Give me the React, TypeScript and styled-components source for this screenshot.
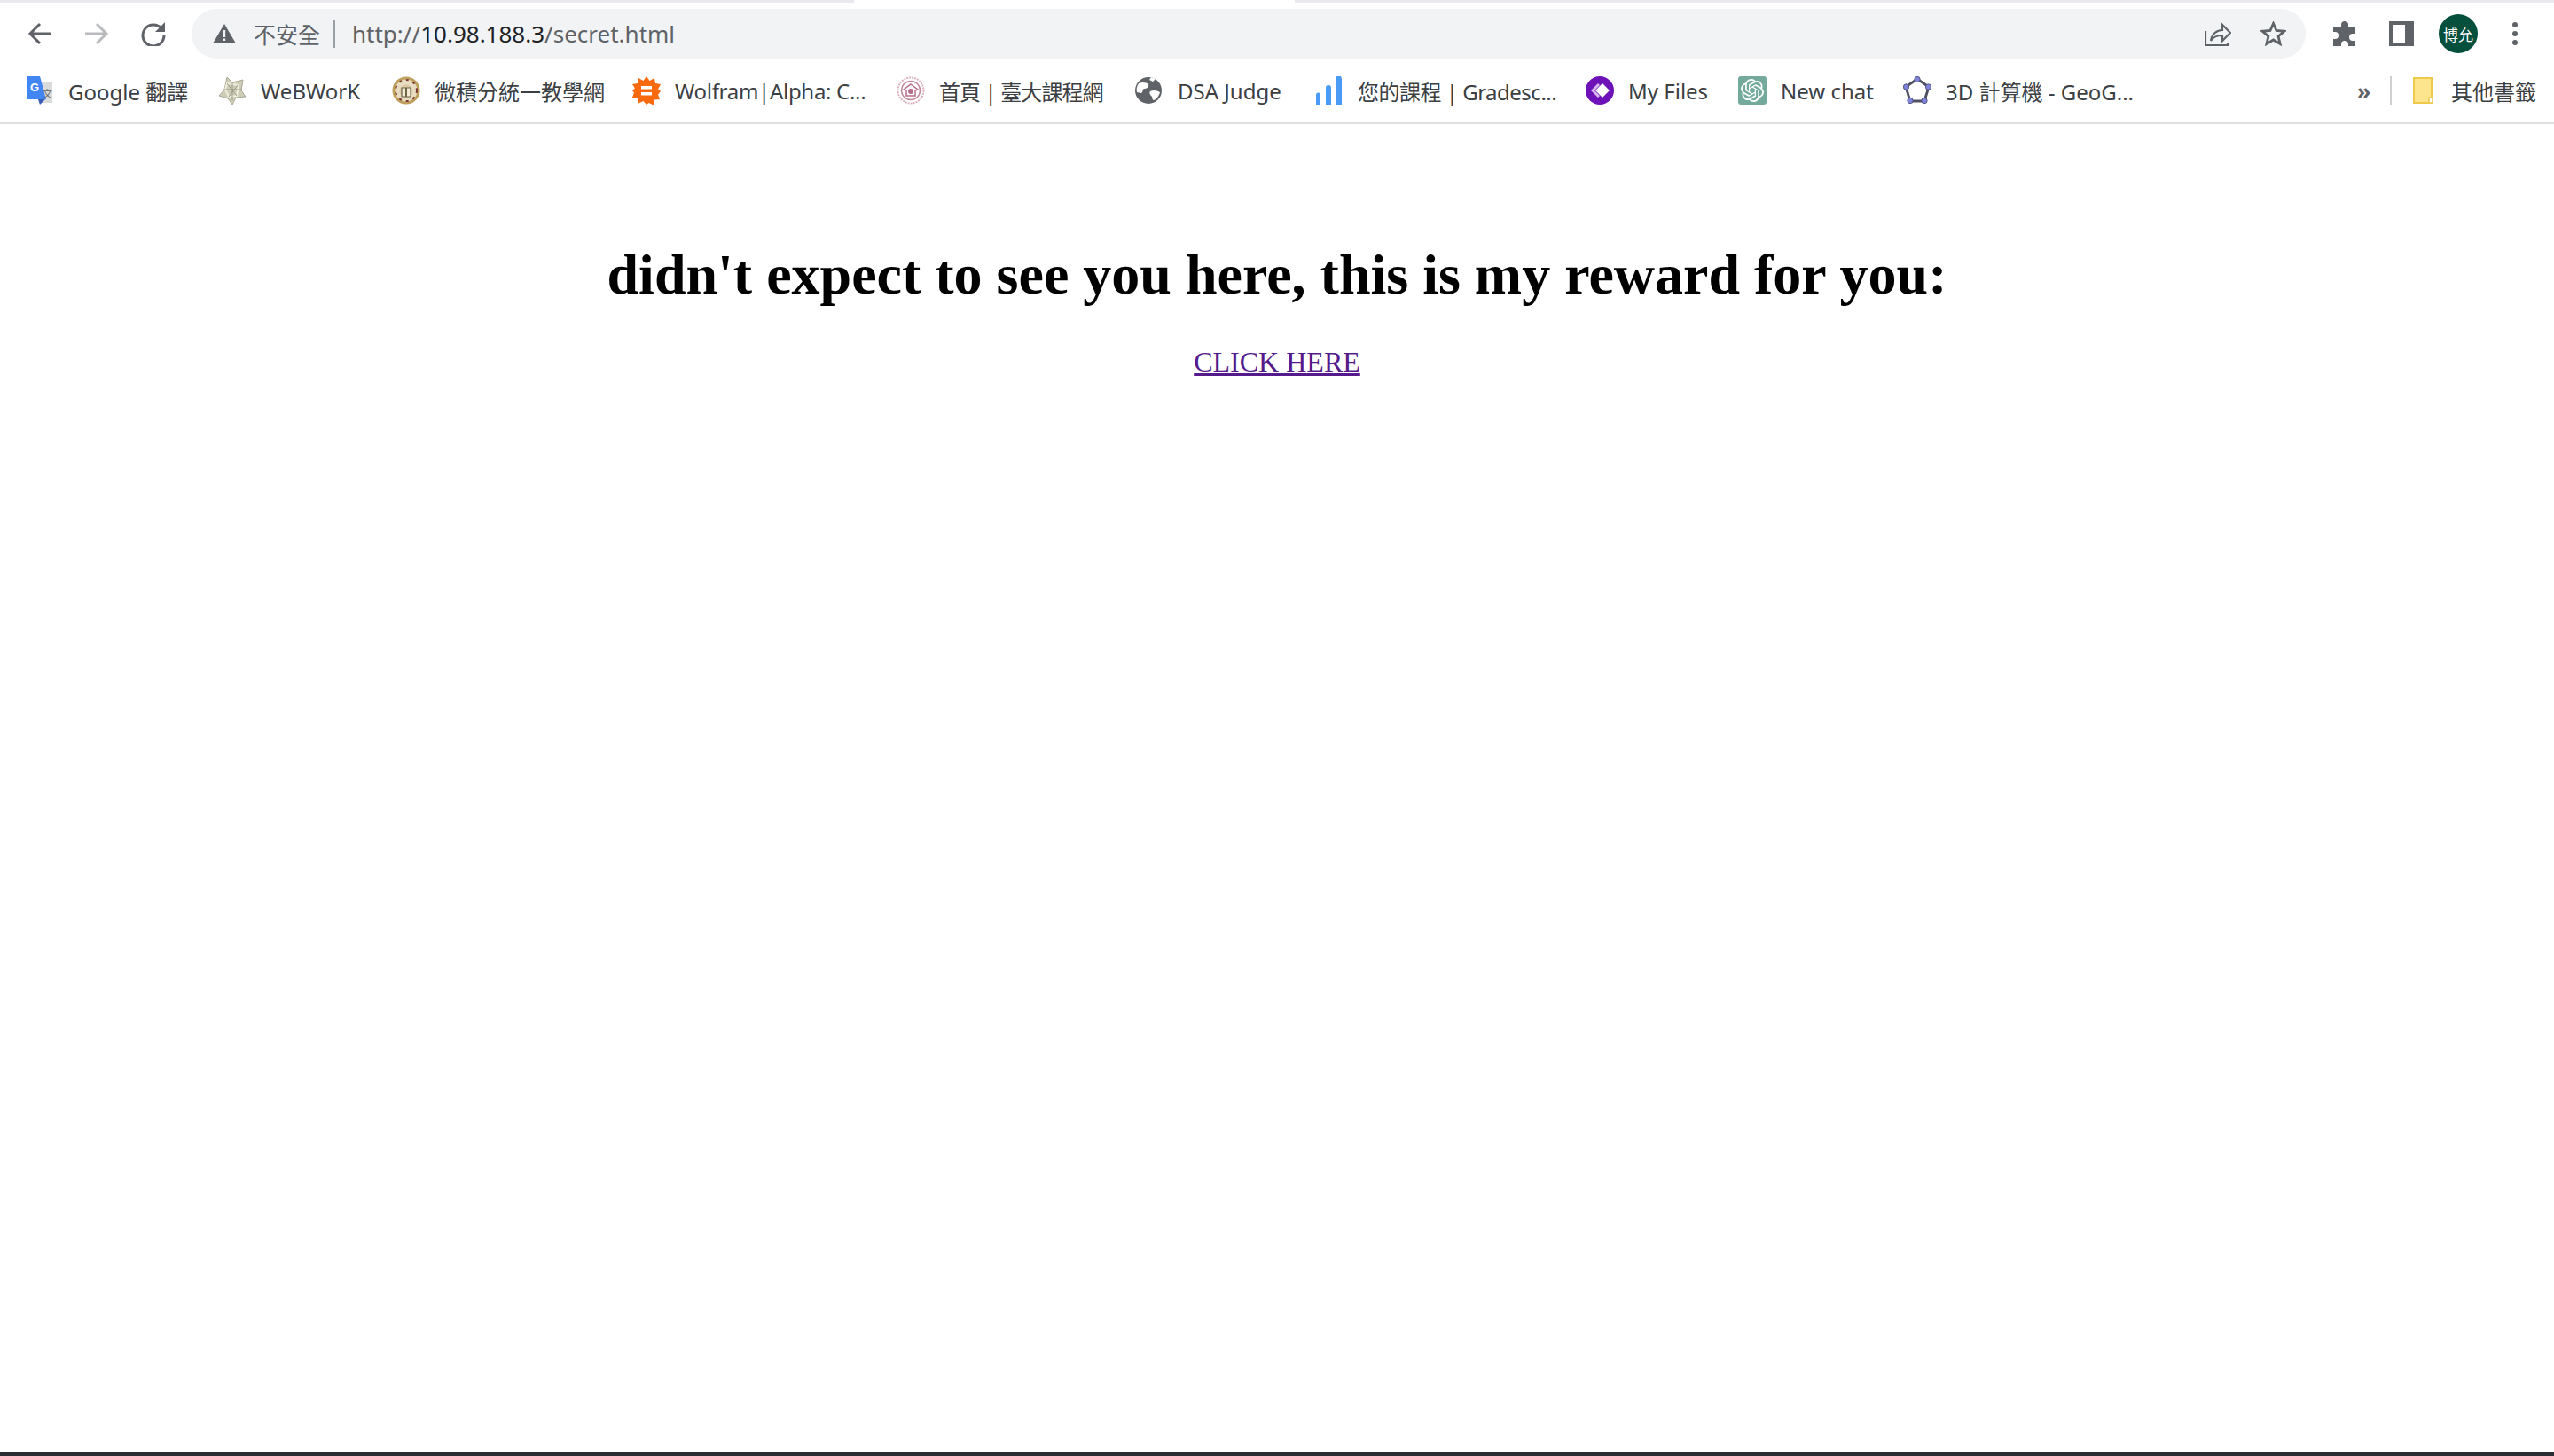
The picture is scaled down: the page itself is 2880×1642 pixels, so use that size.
import React from "react";
import styled, { createGlobalStyle } from "styled-components";
import { SiOpenai } from "react-icons/si";

const Global = createGlobalStyle`
  html, body { margin: 0; padding: 0; background: #fff; }
  #root { height: 1642px; overflow: hidden; }
`;
const Shell = styled.div`
  height: 1642px;
  display: flex;
  flex-direction: column;
`;
const TabStrip = styled.div`
  height: 3px;
  flex: none;
  background: #e8eaed;
  padding-left: 963px;
`;
const ActiveTab = styled.div`
  width: 497px;
  height: 3px;
  background: #fff;
`;
const Toolbar = styled.div`
  height: 63px;
  flex: none;
  box-sizing: border-box;
  display: flex;
  align-items: center;
  padding: 7px 0 0 31px;
  background: #fff;
`;
const NavIcon = styled.svg<{ $mr: number }>`
  width: 28px;
  height: 28px;
  flex: none;
  margin-right: ${(p) => p.$mr}px;
`;
const Omnibox = styled.div`
  width: 2384px;
  height: 56px;
  margin-left: 29px;
  margin-right: 30px;
  flex: none;
  border-radius: 28px;
  background: #f1f3f4;
  display: flex;
  align-items: center;
  padding-left: 24px;
  box-sizing: border-box;
  font: 25px "Noto Sans", "Noto Sans CJK TC", sans-serif;
  color: #5f6368;
`;
const Insecure = styled.span`
  margin-left: 20px;
`;
const Divider = styled.div`
  width: 2px;
  height: 31px;
  background: #9aa0a6;
  margin: 0 19px 0 15px;
`;
const UrlText = styled.span`
  font-size: 26px;
  white-space: nowrap;
  flex: 1;
`;
const Host = styled.span`
  color: #202124;
`;
const ShareIcon = styled.svg`
  width: 30px;
  height: 28px;
  margin-right: 33px;
`;
const StarIcon = styled.svg`
  width: 29px;
  height: 28px;
  margin-right: 22px;
`;
const Avatar = styled.div`
  width: 44px;
  height: 44px;
  border-radius: 50%;
  background: #04503c;
  color: #fff;
  font: 17px "Noto Sans CJK TC", sans-serif;
  display: flex;
  align-items: center;
  justify-content: center;
  flex: none;
  margin-right: 37px;
`;
const Bookmarks = styled.div`
  height: 74px;
  box-sizing: border-box;
  flex: none;
  display: flex;
  align-items: center;
  padding-left: 29px;
  border-bottom: 2px solid #dedede;
  font: 24px "Noto Sans", "Noto Sans CJK TC", sans-serif;
  color: #3c4043;
`;
const Mark = styled.div<{ $gap: number }>`
  display: flex;
  align-items: center;
  flex: none;
  margin-right: ${(p) => p.$gap}px;
`;
const Fav = styled.svg`
  width: 32px;
  height: 32px;
  flex: none;
  margin-right: 16px;
`;
const FolderIcon = styled.svg`
  width: 24px;
  height: 30px;
  flex: none;
  margin-right: 19px;
`;
const GptTile = styled.div`
  width: 32px;
  height: 32px;
  flex: none;
  margin-right: 16px;
  border-radius: 3px;
  background: #74aa9c;
  color: #fff;
  display: flex;
  align-items: center;
  justify-content: center;
  font-size: 26px;
`;
const MarkLabel = styled.span<{ $w: number; $squeeze?: number }>`
  display: block;
  width: ${(p) => p.$w}px;
  white-space: nowrap;
  letter-spacing: ${(p) => p.$squeeze ?? 0}px;
`;
const Chevrons = styled.span`
  width: 12px;
  margin-left: 250px;
  font: 700 25px "Noto Sans", sans-serif;
  color: #5f6368;
`;
const BarRule = styled.div`
  width: 2px;
  height: 32px;
  background: #d0d0d0;
  margin: 0 24px 0 25px;
`;
const Page = styled.main`
  flex: 1;
  text-align: center;
  background: #fff;
  font-family: "Liberation Serif", "Times New Roman", serif;
  color: #000;
`;
const Heading = styled.h1`
  margin: 0;
  padding-top: 132px;
  font-size: 64px;
  line-height: 76px;
  font-weight: 700;
`;
const Reward = styled.a`
  display: inline-block;
  margin-top: 41px;
  font-size: 32px;
  line-height: 38px;
  color: #551a8b;
  text-decoration: underline;
`;
const TaskEdge = styled.div`
  height: 4px;
  flex: none;
  background: #2a2d31;
`;

const marks: { label: string; w: number; gap: number; squeeze?: number; icon: React.ReactNode }[] = [
  {
    label: "Google 翻譯",
    w: 137,
    gap: 32,
    icon: (
      <>
        <path d="M14 6h16v24H16z" fill="#dadcdc" />
        <path d="M1 0h15l7 26H1z" fill="#4285f4" />
        <path d="M14 26h8l-6 6z" fill="#3a5bb8" />
        <text x="5" y="17" fontSize="13" fontWeight="700" fill="#fff" fontFamily="Liberation Sans">G</text>
        <text x="19" y="24" fontSize="11" fill="#5f6368" fontFamily="Noto Sans CJK TC">文</text>
      </>
    ),
  },
  {
    label: "WeBWorK",
    w: 116,
    gap: 32,
    icon: (
      <>
        <path d="M10 1l6 6 12-3-2 12 5 7-11 1-4 8-5-7-10-3 6-7z" fill="#cdcdb6" stroke="#a8a994" strokeWidth="1" />
        <path d="M10 8l13 2-2 12-9 1-4-8z" fill="none" stroke="#eeeede" strokeWidth="2" />
        <path d="M16 7v20M5 15h22M10 8l11 14M22 10l-10 13" stroke="#90917f" strokeWidth=".8" />
      </>
    ),
  },
  {
    label: "微積分統一教學網",
    w: 192,
    gap: 31,
    icon: (
      <>
        <circle cx="16" cy="16" r="15.500" fill="#bf9f5c" />
        <circle cx="16" cy="16" r="12.500" fill="#e8dcc3" />
        <circle cx="16" cy="16" r="12" fill="none" stroke="#7a3a33" strokeWidth="2" strokeDasharray="3 5" />
        <circle cx="16" cy="17" r="7.500" fill="#d9c9a4" />
        <path d="M11 13h10v10H11z" fill="#f2ecd9" stroke="#6e6444" strokeWidth="1.200" />
        <path d="M15 13h2v10h-2z" fill="#6e6444" />
      </>
    ),
  },
  {
    label: "Wolfram|Alpha: C...",
    w: 214,
    gap: 36,
    squeeze: -0.3,
    icon: (
      <>
        <path
          d="M16 0l3.500 5 5.500-3 1 6 6 1-3 5.500 3 2.500-3 3.500 2 5.500-6 .5-1 6-5.500-2.500L16 32l-3.500-4-5.500 2.500-1-6-6-.5 2-5.500L0 16l3-2.500L0 9l6-1 1-6 5.500 3z"
          fill="#f96a0e"
        />
        <path d="M10 11h12v3.500H10zM10 18h12v3.500H10z" fill="#fff" />
      </>
    ),
  },
  {
    label: "首頁 | 臺大課程網",
    w: 184,
    gap: 37,
    squeeze: -0.9,
    icon: (
      <>
        <circle cx="16" cy="16" r="14.500" fill="none" stroke="#dcb2c0" strokeWidth="2" strokeDasharray="2 1" />
        <circle cx="16" cy="16" r="10.500" fill="none" stroke="#c08a9c" strokeWidth="1.500" />
        <path d="M16 9l8 6-3 1v6h-10v-6l-3-1z" fill="none" stroke="#b66d88" strokeWidth="1.500" />
        <circle cx="16" cy="17" r="3" fill="#b66d88" />
      </>
    ),
  },
  {
    label: "DSA Judge",
    w: 122,
    gap: 33,
    icon: (
      <>
        <circle cx="15" cy="16" r="15" fill="#5f6368" />
        <path d="M4 8c4-2 9-1 11 1 1 3-2 5-5 5-2 1-1 4-3 5-2 0-3-1-5-1-1-4 0-7 2-10zM17 17c3-2 8-1 11 1-1 4-4 8-7 9-2 0-1-4-3-5-2-2-2-4-1-5zM18 1l5 2-3 3-4-2z" fill="#fff" />
      </>
    ),
  },
  {
    label: "您的課程 | Gradesc...",
    w: 224,
    gap: 33,
    squeeze: -0.5,
    icon: <path d="M1 32v-11a2.500 2.500 0 0 1 5 0v11zM12 32V13a3 3 0 0 1 6 0v19zM23 32V3a3.500 3.500 0 0 1 7 0v29z" fill="#4a9bf5" />,
  },
  {
    label: "My Files",
    w: 91,
    gap: 33,
    icon: (
      <>
        <circle cx="16" cy="16" r="16" fill="#6d12b8" />
        <path d="M14 8L6 16l8 8 2-2-6-6 6-6z" fill="#d9b9f0" />
        <path d="M19 8l8 8-8 8-8-8z" fill="#fff" />
      </>
    ),
  },
  {
    label: "New chat",
    w: 105,
    gap: 33,
    icon: null,
  },
  {
    label: "3D 計算機 - GeoG...",
    w: 214,
    gap: 0,
    icon: (
      <>
        <path d="M16 3l13 9-5 16H8L3 12z" fill="none" stroke="#4f5060" strokeWidth="2.800" />
        <g fill="#7f83d8" stroke="#44456a" strokeWidth=".8">
          <circle cx="16" cy="3.500" r="3.200" />
          <circle cx="28.500" cy="12" r="3.200" />
          <circle cx="24" cy="27.500" r="3.200" />
          <circle cx="8" cy="27.500" r="3.200" />
          <circle cx="3.500" cy="12" r="3.200" />
        </g>
      </>
    ),
  },
];

export default function App() {
  return (
    <Shell>
      <Global />
      <TabStrip>
        <ActiveTab />
      </TabStrip>
      <Toolbar>
        <NavIcon $mr={36} viewBox="0 0 28 28">
          <path d="M27 14H3M14 3L3 14l11 11" fill="none" stroke="#5f6368" strokeWidth="3" />
        </NavIcon>
        <NavIcon $mr={36} viewBox="0 0 28 28">
          <path d="M1 14h24M14 3l11 11-11 11" fill="none" stroke="#b9bbbe" strokeWidth="3" />
        </NavIcon>
        <NavIcon $mr={0} viewBox="0 0 28 28">
          <path d="M23 8A12 12 0 1 0 26 16" fill="none" stroke="#5f6368" strokeWidth="3" />
          <path d="M27 1v11H16z" fill="#5f6368" />
        </NavIcon>
        <Omnibox>
          <svg width="26" height="22" viewBox="0 0 26 22">
            <path d="M13 0l13 22H0z" fill="#5f6368" />
            <path d="M11.800 7h2.400v8h-2.400zM11.800 16.500h2.400v2.500h-2.400z" fill="#f1f3f4" />
          </svg>
          <Insecure>不安全</Insecure>
          <Divider />
          <UrlText>
            http://<Host>10.98.188.3</Host>/secret.html
          </UrlText>
          <ShareIcon viewBox="0 0 30 28">
            <path d="M1 11v16h25v-3" fill="none" stroke="#5f6368" strokeWidth="2.200" />
            <path d="M7 22c1-8 7-12 13-12V4l9 9-9 9v-6c-6 0-10 1-13 6z" fill="none" stroke="#5f6368" strokeWidth="2.200" />
          </ShareIcon>
          <StarIcon viewBox="0 0 29 28">
            <path d="M14.500 2.500l3.500 8 8.700.8-6.600 5.700 2 8.500-7.600-4.500-7.600 4.500 2-8.500-6.600-5.700 8.700-.8z" fill="none" stroke="#5f6368" strokeWidth="2.800" />
          </StarIcon>
        </Omnibox>
        <NavIcon $mr={36} viewBox="0 0 28 28">
          <path d="M10 4a4 4 0 0 1 8 0v3h8v7h-3a4 4 0 0 0 0 8h3v6h-8v-2a4 4 0 0 0-8 0v2H1v-8h2a4 4 0 0 0 0-8H1V7h9z" fill="#5f6368" />
        </NavIcon>
        <NavIcon $mr={28} viewBox="0 0 28 28">
          <path fillRule="evenodd" d="M0 0h28v28H0zM4 4v20h14V4z" fill="#5f6368" />
        </NavIcon>
        <Avatar>博允</Avatar>
        <svg width="10" height="28" viewBox="0 0 10 28">
          <circle cx="5" cy="4" r="3" fill="#5f6368" />
          <circle cx="5" cy="14" r="3" fill="#5f6368" />
          <circle cx="5" cy="24" r="3" fill="#5f6368" />
        </svg>
      </Toolbar>
      <Bookmarks>
        {marks.map((m) => (
          <Mark key={m.label} $gap={m.gap}>
            {m.icon ? (
              <Fav viewBox="0 0 32 32">{m.icon}</Fav>
            ) : (
              <GptTile>
                <SiOpenai />
              </GptTile>
            )}
            <MarkLabel $w={m.w} $squeeze={m.squeeze}>{m.label}</MarkLabel>
          </Mark>
        ))}
        <Chevrons>»</Chevrons>
        <BarRule />
        <FolderIcon viewBox="0 0 24 30">
          <path d="M1 1h20v28H1z" fill="#fde58e" stroke="#efc94c" strokeWidth="2" />
          <path d="M18 23h4v6h-4z" fill="#fff" stroke="#efc94c" strokeWidth="1.500" />
        </FolderIcon>
        <MarkLabel $w={95}>其他書籤</MarkLabel>
      </Bookmarks>
      <Page>
        <Heading>didn't expect to see you here, this is my reward for you:</Heading>
        <Reward href="#">CLICK HERE</Reward>
      </Page>
      <TaskEdge />
    </Shell>
  );
}
